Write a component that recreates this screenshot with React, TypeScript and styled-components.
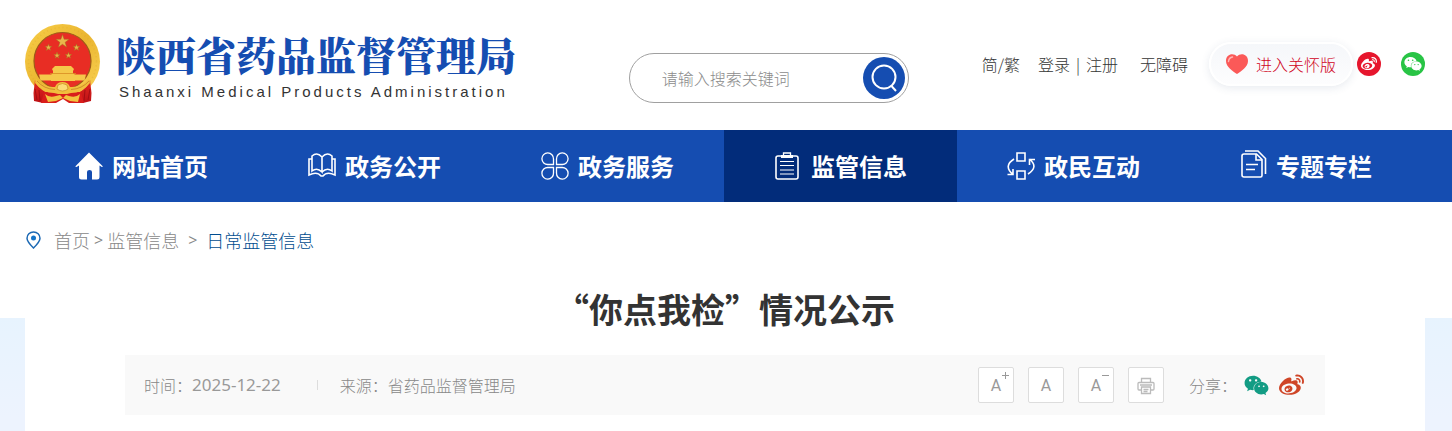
import React from "react";
import styled, { createGlobalStyle } from "styled-components";
import { FaWeibo, FaWeixin } from "react-icons/fa";

const Global = createGlobalStyle`
  *, *::before, *::after { box-sizing: border-box; }
  body {
    margin: 0;
    background: #fff;
    color: #333;
    font-family: "Noto Sans CJK SC", sans-serif;
    font-size: 16px;
    font-weight: 300;
    line-height: 24px;
  }
  a { color: inherit; text-decoration: none; }
  button, input { font: inherit; }
  svg { display: block; flex: none; }
`;

const Page = styled.div`
  min-height: 100vh;
  display: flex;
  flex-direction: column;
`;

const gutters = "0 27px 0 25px";

const Header = styled.header`
  height: 130px;
  padding: ${gutters};
  display: flex;
  justify-content: space-between;
`;

const Brand = styled.a`
  display: flex;
  align-items: flex-start;
  gap: 15px;
  padding-top: 23px;
`;

const BrandText = styled.span`
  display: flex;
  flex-direction: column;
  padding-top: 6px;
`;

const BrandName = styled.span`
  font-family: "Noto Serif CJK SC", "Noto Sans CJK SC", serif;
  font-size: 40px;
  line-height: 50px;
  font-weight: 900;
  color: #154db1;
  white-space: nowrap;
`;

const BrandLatin = styled.span`
  font-family: "Liberation Sans", Arial, sans-serif;
  font-size: 15px;
  line-height: 26px;
  font-weight: 400;
  letter-spacing: 3px;
  padding-left: 3px;
  white-space: nowrap;
`;

const Search = styled.form`
  width: 280px;
  height: 50px;
  margin: 53px 0 0 40px;
  padding: 0 3px 0 32px;
  display: flex;
  align-items: center;
  border: 1px solid #a0a0a0;
  border-radius: 25px;
`;

const SearchInput = styled.input`
  flex: 1;
  min-width: 0;
  padding: 0;
  border: 0;
  outline: 0;
  background: none;
  color: #333;
  &::placeholder { color: #8c8c8c; opacity: 1; }
`;

const SearchButton = styled.button`
  width: 42px;
  height: 42px;
  padding: 0;
  border: 0;
  border-radius: 50%;
  background: #154db1;
  display: grid;
  place-items: center;
`;

const Tools = styled.div`
  height: 24px;
  margin-top: 52px;
  display: flex;
  align-items: center;
  white-space: nowrap;
`;

const ToolLinks = styled.div`
  display: flex;
  gap: 18px;
`;

const Account = styled.span`
  display: flex;
  padding-right: 4px;
`;

const Pipe = styled.span`
  width: 16px;
  text-align: center;
`;

const CareLink = styled.a`
  height: 44px;
  margin: 0 4px 0 21px;
  padding: 0 15px;
  display: flex;
  align-items: center;
  gap: 8px;
  color: #d0021b;
  background: linear-gradient(#f5f7fa, #fdfdfe);
  border: 2px solid #fff;
  border-radius: 22px;
  box-shadow: 0 2px 8px rgba(60, 80, 120, 0.12);
`;

const Social = styled.a<{ $color: string }>`
  width: 24px;
  height: 24px;
  border-radius: 50%;
  display: grid;
  place-items: center;
  color: #fff;
  background: ${(p) => p.$color};
  & + & { margin-left: 20px; }
`;

const Nav = styled.nav`
  background: #154db1;
  padding: ${gutters};
`;

const NavList = styled.ul`
  margin: 0;
  padding: 0 2px 0 0;
  list-style: none;
  display: flex;
`;

const NavItem = styled.li`
  flex: 1;
`;

const NavLink = styled.a<{ $active?: boolean }>`
  height: 72px;
  display: flex;
  align-items: center;
  justify-content: center;
  gap: 9px;
  color: #fff;
  font-size: 24px;
  line-height: 36px;
  font-weight: 700;
  white-space: nowrap;
  background: ${(p) => (p.$active ? "#022c7a" : "transparent")};
`;

const Body = styled.div`
  flex: 1;
  display: flex;
  padding: ${gutters};
  background: linear-gradient(#e7f3fe, #edf3fe 100px) 0 116px no-repeat;
`;

const Main = styled.main`
  flex: 1;
  min-width: 0;
  padding-bottom: 16px;
  background: #fff;
`;

const Crumbs = styled.nav`
  padding-top: 24px;
  display: flex;
  align-items: center;
  font-size: 18px;
  line-height: 28px;
  color: #888;
  svg { margin: 0 13px 0 1px; }
`;

const Separator = styled.span<{ $space: number }>`
  font-family: "Open Sans", sans-serif;
  font-size: 16px;
  font-weight: 400;
  padding: 0 ${(p) => p.$space}px;
`;

const Current = styled.a`
  color: #004d8f;
`;

const Title = styled.h1`
  margin: 31px 0 22px;
  font-size: 34px;
  line-height: 48px;
  font-weight: 700;
  text-align: center;
`;

const Meta = styled.div`
  height: 60px;
  margin: 0 100px;
  padding: 0 21px 0 19px;
  display: flex;
  align-items: center;
  background: #f9f9f9;
  color: #888;
  white-space: nowrap;
`;

const MetaText = styled.span`
  display: flex;
  align-items: center;
`;

const DateText = styled.time`
  font-family: "Noto Sans", sans-serif;
  font-size: 17px;
  font-weight: 400;
  color: #999;
`;

const Divider = styled.span`
  width: 1px;
  height: 10px;
  margin: 0 22px 0 36px;
  background: #ddd;
`;

const Actions = styled.div`
  margin-left: auto;
  display: flex;
  gap: 14px;
`;

const ActionButton = styled.button`
  position: relative;
  width: 36px;
  height: 36px;
  padding: 2px 0 0;
  border: 1px solid #ddd;
  border-radius: 2px;
  background: #fff;
  color: #999;
  font-family: Roboto, sans-serif;
  font-weight: 400;
  line-height: 20px;
  display: grid;
  place-items: center;
`;

const Sign = styled.svg`
  position: absolute;
  top: 4px;
  right: 4px;
`;

const Share = styled.div`
  margin-left: 25px;
  display: flex;
  align-items: center;
`;

const ShareLink = styled.a<{ $color: string }>`
  color: ${(p) => p.$color};
  margin-left: 7px;
  & + & { margin-left: 10px; }
`;

const star = (cx: number, cy: number, r: number) =>
  Array.from({ length: 10 }, (_, i) => {
    const a = (Math.PI / 5) * i - Math.PI / 2;
    const q = i % 2 ? r * 0.4 : r;
    return `${cx + q * Math.cos(a)},${cy + q * Math.sin(a)}`;
  }).join(" ");

const Emblem = () => (
  <svg width="76" height="82" viewBox="0 0 76 82" aria-hidden="true">
    <defs>
      <linearGradient id="gold" x1="0" y1="0" x2="1" y2="1">
        <stop offset="0" stopColor="#f8cf49" />
        <stop offset=".5" stopColor="#eab530" />
        <stop offset="1" stopColor="#fbd558" />
      </linearGradient>
      <linearGradient id="drape" x1="0" y1="0" x2="0" y2="1">
        <stop offset="0" stopColor="#e32a22" />
        <stop offset="1" stopColor="#bd1015" />
      </linearGradient>
    </defs>
    <circle cx="37.500" cy="38.500" r="37.500" fill="url(#gold)" />
    <circle cx="37.500" cy="38.500" r="34" fill="none" stroke="#d79f25" strokeWidth="1.500" strokeDasharray="1 3" opacity=".3" />
    <circle cx="37.500" cy="38" r="28.500" fill="#e82d24" stroke="#9d5b18" strokeWidth="1.200" />
    <g fill="#e9b64b" stroke="#a76a1c" strokeWidth=".5">
      <polygon points={star(37.5, 18.5, 7)} />
      <polygon points={star(23.5, 24.5, 3.6)} />
      <polygon points={star(51.5, 24.5, 3.6)} />
      <polygon points={star(32, 32.5, 3.4)} />
      <polygon points={star(43.5, 32.5, 3.4)} />
    </g>
    <g fill="#f5c84a">
      <path d="M30 43h16l3 3-1 2H28l-1-2z" />
      <path d="M28 48h20v2l2 2H26l2-2zM26 52h24v6H26z" />
      <path d="M14 51.500h13V54h22v-2.500h12l-1.500 6h-44z" />
    </g>
    <path d="M25 50.500h26" stroke="#d88b22" strokeWidth=".8" />
    <path d="M10 57q2 8 12 13l-4 10-9-2-.5-8zM65 57q-2 8-12 13l5 10 8-2 .5-8z" fill="url(#drape)" />
    <path d="M10 66l2 11M14 67l1 11M65 66l-2 11M60 67l-1 11" stroke="#9f0c12" strokeWidth=".9" fill="none" />
    <path d="M19 69h37l3 11H44l-6-4-7 4H16z" fill="#d91d1b" />
    <path d="M11 56q8 9 19 8 2-5 7.500-5t7.500 5q11 1 19-8l1 4q-8 10-19 10l-4 1h-9l-4-1q-11 0-19-10z" fill="#f1be3d" />
    <path d="M12 58q7 8 18 8.500M64 58q-7 8-18 8.500" fill="none" stroke="#bd7922" strokeWidth=".7" />
    <path d="M33 62q4.500-3 9 0l1 4q-5.500 4-11 0z" fill="#fbdc76" stroke="#c07c20" strokeWidth=".6" />
    <path d="M20 71q4 4 11 2l4-1 3 3 3-3 3 1q7 2 11-2l-2 8-8-1-7-3-7 3-8 1z" fill="#f2c23f" />
  </svg>
);

const stroke = { fill: "none", stroke: "#fff", strokeWidth: 1.6 } as const;

const HomeIcon = () => (
  <svg width="28" height="28" viewBox="0 0 28 28" fill="#fff">
    <path d="M14 .5 28 14.500l-1.200.6-2.300-1.600V25q0 2.500-2.500 2.500h-5V20q0-2-2.500-2T12 20v7.500H6.500Q4 27.500 4 25V13.500l-2.500 1.600L.2 14.500z" />
  </svg>
);

const BookIcon = () => (
  <svg width="28" height="28" viewBox="0 0 28 28" {...stroke}>
    <path d="M14 5Q9-.5 4 4v15q5-4 10 1V5Q19-.5 24 4v15q-5-4-10 1" />
    <path d="M4 7H1v16q8-4 12 1h2q4-5 12-1V7h-3" />
  </svg>
);

const CloverIcon = () => (
  <svg width="28" height="28" viewBox="0 0 28 28" {...stroke} strokeWidth={1.3}>
    <path d="M12.500 12.500V7A5.800 5.800 0 1 0 7 12.500zM15.500 12.500V7A5.800 5.800 0 1 1 21 12.500zM12.500 15.500V21A5.800 5.800 0 1 1 7 15.500zM15.500 15.500V21A5.800 5.800 0 1 0 21 15.500z" />
  </svg>
);

const ClipboardIcon = () => (
  <svg width="28" height="28" viewBox="0 0 28 28" {...stroke}>
    <path d="M7 4H4Q2 4 2 6v19q0 2 2 2h18q2 0 2-2V6q0-2-2-2h-3" />
    <path d="M7 6V3h12v3z" fill="#fff" stroke="none" />
    <path d="M9.500 3V1h7v2" strokeWidth={1.3} />
    <path d="M6 9.500h14M6 13.500h14M6 18h14M6 22h14" strokeWidth={1.2} />
  </svg>
);

const ExchangeIcon = () => (
  <svg width="28" height="28" viewBox="0 0 28 28" {...stroke}>
    <path d="M10 1h8v8h-8zM10 19h8v8h-8z" />
    <path d="M7 7Q-4 14 6 22.500M.5 22.500H6V17M21 22Q32 15 22.500 7M28 7.500h-5.500V13" />
  </svg>
);

const PagesIcon = () => (
  <svg width="26" height="32" viewBox="0 0 26 32" {...stroke}>
    <path d="M3 4h12.500L21 9.500v16q0 1.500-1.500 1.500H3q-2 0-2-2V6q0-2 2-2z" />
    <path d="M15 4v6h6M5 14.500h12M5 19.500h9M4 1h13l7.500 7.500V24" />
  </svg>
);

const SearchIcon = () => (
  <svg width="26" height="28" viewBox="0 0 26 28" fill="none" stroke="#fff" strokeWidth="2">
    <circle cx="13" cy="13" r="11.500" />
    <path d="m20.500 22 4.500 5" />
  </svg>
);

const HeartIcon = () => (
  <svg width="22" height="20" viewBox="0 0 22 20">
    <path d="M11 2.500C7.500-1.500 0 0 0 7c0 6 7 10.500 11 13 4-2.500 11-7 11-13 0-7-7.500-8.500-11-4.500z" fill="#fb5958" />
    <path d="M2.500 7.500q.5-4 4-4.500" stroke="#ffb6b4" strokeWidth="1.500" fill="none" strokeLinecap="round" />
  </svg>
);

const PinIcon = () => (
  <svg width="15" height="18" viewBox="0 0 15 18">
    <path d="M7.500 1C3.800 1 1 3.600 1 7.200c0 3.300 3.500 6.800 6.500 9.800 3-3 6.500-6.500 6.500-9.800C14 3.600 11.200 1 7.500 1z" fill="none" stroke="#1c69b4" strokeWidth="1.500" />
    <circle cx="7.500" cy="7" r="2.500" fill="#1373c8" />
  </svg>
);

const PrinterIcon = () => (
  <svg width="18" height="18" viewBox="0 0 18 18" fill="none" stroke="#bbb" strokeWidth="1.300">
    <path d="M4.500 5V1.500h9V5M4.500 13H2q-1 0-1-1V6.500q0-1 1-1h14q1 0 1 1V12q0 1-1 1h-2.500" />
    <path d="M4.500 10h9v6.500h-9zM6.500 12.500h5M6.500 14.500h4M3 8h12" />
  </svg>
);

const navItems = [
  { label: "网站首页", Icon: HomeIcon },
  { label: "政务公开", Icon: BookIcon },
  { label: "政务服务", Icon: CloverIcon },
  { label: "监管信息", Icon: ClipboardIcon, active: true },
  { label: "政民互动", Icon: ExchangeIcon },
  { label: "专题专栏", Icon: PagesIcon },
];

export default function App() {
  return (
    <Page lang="zh-CN">
      <Global />
      <Header>
        <Brand href="#">
          <Emblem />
          <BrandText>
            <BrandName>陕西省药品监督管理局</BrandName>
            <BrandLatin>Shaanxi Medical Products Administration</BrandLatin>
          </BrandText>
        </Brand>
        <Search onSubmit={(e) => e.preventDefault()}>
          <SearchInput type="text" placeholder="请输入搜索关键词" aria-label="搜索" />
          <SearchButton type="submit" aria-label="搜索"><SearchIcon /></SearchButton>
        </Search>
        <Tools>
          <ToolLinks>
            <a href="#">简/繁</a>
            <Account><a href="#">登录</a><Pipe>|</Pipe><a href="#">注册</a></Account>
            <a href="#">无障碍</a>
          </ToolLinks>
          <CareLink href="#"><HeartIcon />进入关怀版</CareLink>
          <Social href="#" $color="#e6162d" aria-label="微博"><FaWeibo size={16} /></Social>
          <Social href="#" $color="#28c445" aria-label="微信"><FaWeixin size={18} /></Social>
        </Tools>
      </Header>
      <Nav>
        <NavList>
          {navItems.map(({ label, Icon, active }) => (
            <NavItem key={label}>
              <NavLink href="#" $active={active}><Icon />{label}</NavLink>
            </NavItem>
          ))}
        </NavList>
      </Nav>
      <Body>
        <Main>
          <Crumbs>
            <PinIcon />
            <a href="#">首页</a>
            <Separator $space={4}>&gt;</Separator>
            <a href="#">监管信息</a>
            <Separator $space={9}>&gt;</Separator>
            <Current href="#">日常监管信息</Current>
          </Crumbs>
          <Title>“你点我检”情况公示</Title>
          <Meta>
            <MetaText>时间：<DateText dateTime="2025-12-22">2025-12-22</DateText></MetaText>
            <Divider />
            <MetaText>来源：省药品监督管理局</MetaText>
            <Actions>
              <ActionButton type="button" aria-label="放大字号">
                A
                <Sign width="7" height="7" viewBox="0 0 7 7" stroke="#999"><path d="M0 3.500h7M3.500 0v7" /></Sign>
              </ActionButton>
              <ActionButton type="button" aria-label="默认字号">A</ActionButton>
              <ActionButton type="button" aria-label="缩小字号">
                A
                <Sign width="7" height="7" viewBox="0 0 7 7" stroke="#999"><path d="M0 3.500h7" /></Sign>
              </ActionButton>
              <ActionButton type="button" aria-label="打印"><PrinterIcon /></ActionButton>
            </Actions>
            <Share>
              分享：
              <ShareLink href="#" $color="#139c84" aria-label="微信"><FaWeixin size={25} /></ShareLink>
              <ShareLink href="#" $color="#cf4527" aria-label="微博"><FaWeibo size={25} /></ShareLink>
            </Share>
          </Meta>
        </Main>
      </Body>
    </Page>
  );
}
